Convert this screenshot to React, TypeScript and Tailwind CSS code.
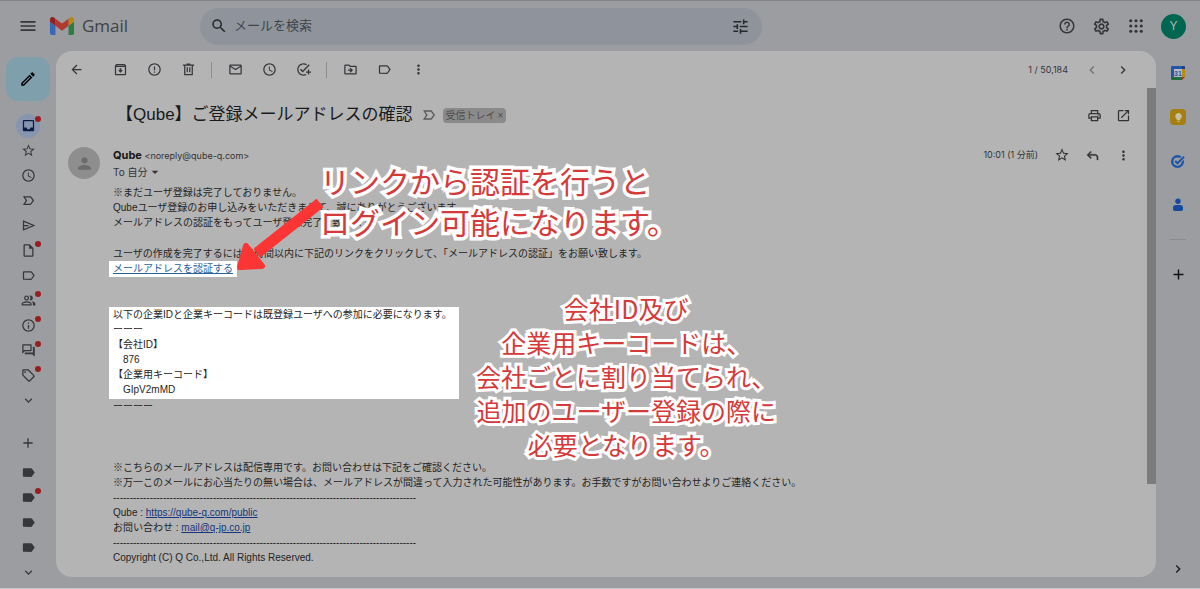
import React from "react";
import type { IconType } from "react-icons";
import {
  MdAdd,
  MdArrowBack,
  MdArrowDropDown,
  MdChevronLeft,
  MdChevronRight,
  MdErrorOutline,
  MdExpandMore,
  MdHelpOutline,
  MdInbox,
  MdInfoOutline,
  MdLabel,
  MdLabelImportantOutline,
  MdLabelOutline,
  MdLightbulb,
  MdMenu,
  MdMoreVert,
  MdOpenInNew,
  MdOutlineAddTask,
  MdOutlineArchive,
  MdOutlineDriveFileMove,
  MdOutlineEdit,
  MdOutlineForum,
  MdOutlineInsertDriveFile,
  MdOutlineLocalOffer,
  MdOutlineMail,
  MdOutlinePeopleAlt,
  MdOutlinePrint,
  MdOutlineSettings,
  MdPerson,
  MdSchedule,
  MdSearch,
  MdStarBorder,
  MdTune,
} from "react-icons/md";

type IconLike = IconType | typeof SendIcon;

type RailItem = {
  label: string;
  icon: IconLike;
  unread?: boolean;
  active?: boolean;
};

const MAIL_FOLDERS: RailItem[] = [
  { label: "受信トレイ", icon: MdInbox, unread: true, active: true },
  { label: "スター付き", icon: MdStarBorder },
  { label: "スヌーズ中", icon: MdSchedule },
  { label: "重要", icon: MdLabelImportantOutline },
  { label: "送信済み", icon: SendIcon },
  { label: "下書き", icon: MdOutlineInsertDriveFile, unread: true },
  { label: "カテゴリ", icon: MdLabelOutline },
  { label: "ソーシャル", icon: MdOutlinePeopleAlt, unread: true },
  { label: "新着", icon: MdInfoOutline, unread: true },
  { label: "フォーラム", icon: MdOutlineForum, unread: true },
  { label: "プロモーション", icon: MdOutlineLocalOffer, unread: true },
  { label: "もっと見る", icon: MdExpandMore },
];

const LABELS: RailItem[] = [
  { label: "ラベル 1", icon: MdLabel },
  { label: "ラベル 2", icon: MdLabel, unread: true },
  { label: "ラベル 3", icon: MdLabel },
  { label: "ラベル 4", icon: MdLabel },
  { label: "ラベルをもっと見る", icon: MdExpandMore },
];

const TOOL_GROUPS: { label: string; icon: IconLike }[][] = [
  [
    { label: "アーカイブ", icon: MdOutlineArchive },
    { label: "迷惑メールを報告", icon: MdErrorOutline },
    { label: "削除", icon: TrashIcon },
  ],
  [
    { label: "未読にする", icon: MdOutlineMail },
    { label: "スヌーズ", icon: MdSchedule },
    { label: "ToDo リストに追加", icon: MdOutlineAddTask },
  ],
  [
    { label: "移動", icon: MdOutlineDriveFileMove },
    { label: "ラベル", icon: MdLabelOutline },
    { label: "その他", icon: MdMoreVert },
  ],
];

const RULE = "-".repeat(91);

function SendIcon({ className }: { className?: string }) {
  return (
    <svg viewBox="0 0 24 24" className={className} fill="none" stroke="currentColor" strokeWidth={2}>
      <path d="M4 5l16.5 7L4 19zM4 12h8" />
    </svg>
  );
}

function TrashIcon({ className }: { className?: string }) {
  return (
    <svg viewBox="0 0 24 24" className={className} fill="none" stroke="currentColor" strokeWidth={2}>
      <path d="M3 5h18M9 3.5h6M6 5v15h12V5M10 8.5v8M14 8.5v8" />
    </svg>
  );
}

function ReplyIcon({ className }: { className?: string }) {
  return (
    <svg viewBox="0 0 24 24" className={className} fill="currentColor" stroke="currentColor" strokeWidth={0.6}>
      <path d="M19 19v-4c0-1.7-1.3-3-3-3H6.8l3.6 3.6L9 17l-6-6 6-6 1.4 1.4L6.8 10H16c2.8 0 5 2.2 5 5v4z" />
    </svg>
  );
}

function AppsIcon({ className }: { className?: string }) {
  return (
    <svg viewBox="0 0 24 24" className={className} fill="currentColor">
      {[5, 12, 19].map((y) =>
        [5, 12, 19].map((x) => <circle key={`${x}-${y}`} cx={x} cy={y} r="2.1" />)
      )}
    </svg>
  );
}

function GmailLogo() {
  return (
    <svg viewBox="52 42 88 66" className="w-6 h-[18px]">
      <path fill="#3a66b5" d="M58 108h14V74L52 59v43c0 3.32 2.69 6 6 6" />
      <path fill="#2b7d43" d="M120 108h14c3.32 0 6-2.69 6-6V59l-20 15" />
      <path fill="#b48a10" d="M120 48v26l20-15v-8c0-7.42-8.47-11.65-14.4-7.2" />
      <path fill="#b13a30" d="M72 74V48l24 18 24-18v26L96 92" />
      <path fill="#8f2120" d="M52 51v8l20 15V48l-5.6-4.4c-5.94-4.45-14.4-.22-14.4 7.2" />
    </svg>
  );
}

function CalendarIcon() {
  return (
    <svg viewBox="0 0 16 16" className="w-4 h-4">
      <path fill="#2456a8" d="M2 1h10v3H4v8H1V2a1 1 0 0 1 1-1z" />
      <path fill="#1b3f85" d="M12 1h2a1 1 0 0 1 1 1v2h-3z" />
      <path fill="#b98a14" d="M12 4h3v8h-3z" />
      <path fill="#1f6b3a" d="M1 12h11v3H2a1 1 0 0 1-1-1z" />
      <path fill="#a8352c" d="M12 12h3l-3 3z" />
      <path fill="#b9bcc2" d="M4 4h8v8H4z" />
      <text x="8" y="10.5" textAnchor="middle" fontSize="7" fontWeight="700" fill="#2456a8">
        31
      </text>
    </svg>
  );
}

function TasksIcon() {
  return (
    <svg viewBox="0 0 16 16" className="w-4 h-4" fill="none">
      <circle cx="7.5" cy="8.5" r="5.3" stroke="#1c55a8" strokeWidth="2.4" />
      <path d="M5 8l2.4 2.4L14 3.6" stroke="#9b9da1" strokeWidth="4" />
      <path d="M5.2 8l2.3 2.3L14 3.8" stroke="#1c55a8" strokeWidth="2" />
    </svg>
  );
}

function ContactsIcon() {
  return (
    <svg viewBox="0 0 16 16" className="w-4 h-4" fill="#154a9c">
      <circle cx="8" cy="4.2" r="2.7" />
      <path d="M3 10.5C3 8.8 4.3 8 6 8h4c1.7 0 3 .8 3 2.5V12c0 1-.7 2-2 2H5c-1.3 0-2-1-2-2z" />
    </svg>
  );
}

function Rail({ items }: { items: RailItem[] }) {
  return (
    <ul className="w-full">
      {items.map(({ label, icon: Icon, unread, active }) => (
        <li key={label} className="h-[25px] flex justify-center items-center">
          <a
            href="#"
            aria-label={label}
            className={
              active
                ? "relative w-6 h-6 rounded-full bg-[#8795b0] text-[#0a1c40] flex items-center justify-center"
                : "relative w-6 h-6 flex items-center justify-center text-[#35373a]"
            }
          >
            <Icon className="w-[15px] h-[15px]" />
            {unread && (
              <span className="absolute top-0.5 -right-px w-1.5 h-1.5 rounded-full bg-[#971d20]" />
            )}
          </a>
        </li>
      ))}
    </ul>
  );
}

function Toolbar() {
  return (
    <div className="h-[37px] shrink-0 flex items-center pl-[3px] pr-[18px] text-[#35363a]">
      <button type="button" aria-label="戻る" className="w-[34px] flex justify-center mr-2.5">
        <MdArrowBack className="w-[15px] h-[15px]" />
      </button>
      {TOOL_GROUPS.map((group, i) => (
        <React.Fragment key={i}>
          {i > 0 && <span className="w-px h-4 mx-1.5 bg-[#8d8e90]" />}
          {group.map(({ label, icon: Icon }) => (
            <button key={label} type="button" aria-label={label} className="w-[34px] flex justify-center">
              <Icon className="w-[15px] h-[15px]" />
            </button>
          ))}
        </React.Fragment>
      ))}
      <span className="ml-auto mr-2 font-['Inter',sans-serif] text-[9px]">1 / 50,184</span>
      <button type="button" aria-label="前へ" className="w-[31px] flex justify-center text-[#6f7073]">
        <MdChevronLeft className="w-4 h-4" />
      </button>
      <button type="button" aria-label="次へ" className="w-[31px] flex justify-center">
        <MdChevronRight className="w-4 h-4" />
      </button>
    </div>
  );
}

function MailBody() {
  return (
    <div className="pl-[57px] pt-[5px] text-[10px] leading-[15px] text-[#242424] whitespace-nowrap">
      <p>※まだユーザ登録は完了しておりません。</p>
      <p>Qubeユーザ登録のお申し込みをいただきまして、誠にありがとうございます。</p>
      <p>メールアドレスの認証をもってユーザ登録完了と致します。</p>
      <p className="mt-4">
        ユーザの作成を完了するには24時間以内に下記のリンクをクリックして、「メールアドレスの認証」をお願い致します。
      </p>
      <p>
        <a href="#" className="inline-block h-4 -ml-1 px-1 bg-white text-[#2a6099] underline">
          メールアドレスを認証する
        </a>
      </p>

      {/* 企業情報 */}
      <div className="mt-[30px] -ml-1 pl-1 pb-0.5 w-[350px] bg-white">
        <p>以下の企業IDと企業キーコードは既登録ユーザへの参加に必要になります。</p>
        <p>ーーー</p>
        <p>【会社ID】</p>
        <p className="pl-2.5">876</p>
        <p>【企業用キーコード】</p>
        <p className="pl-2.5">GIpV2mMD</p>
      </div>
      <p>ーーーー</p>

      <p className="mt-[46px]">※こちらのメールアドレスは配信専用です。お問い合わせは下記をご確認ください。</p>
      <p>
        ※万一このメールにお心当たりの無い場合は、メールアドレスが間違って入力された可能性があります。お手数ですがお問い合わせよりご連絡ください。
      </p>
      <p>{RULE}</p>
      <p>
        Qube :{" "}
        <a href="#" className="text-[#17357a] underline">
          https://qube-q.com/public
        </a>
      </p>
      <p>
        お問い合わせ :{" "}
        <a href="#" className="text-[#17357a] underline">
          mail@q-jp.co.jp
        </a>
      </p>
      <p>{RULE}</p>
      <p>Copyright (C) Q Co.,Ltd. All Rights Reserved.</p>
    </div>
  );
}

// 説明用の矢印と赤文字
function Annotations() {
  return (
    <>
      <svg
        viewBox="0 0 90 76"
        className="absolute left-[179px] top-[108px] w-[90px] h-[76px]"
        fill="#fb3434"
        stroke="#fb3434"
        strokeLinejoin="round"
      >
        <path strokeWidth="11" fill="none" d="M85 7L22 57" />
        <path strokeWidth="6" d="M5 71L11 50L27 70z" />
      </svg>
      <p className="absolute left-[264px] top-[72px] text-[30px] leading-[41px] whitespace-nowrap text-[#d53a3a] [-webkit-text-stroke:7px_white] [paint-order:stroke_fill] [stroke-linejoin:round] font-['Noto_Sans_CJK_JP',sans-serif]">
        リンクから認証を行うと
        <br />
        ログイン可能になります。
      </p>
      <p className="absolute left-[420px] top-[203px] text-[25px] leading-[34px] text-center whitespace-nowrap text-[#d53a3a] [-webkit-text-stroke:6px_white] [paint-order:stroke_fill] [stroke-linejoin:round] font-['Noto_Sans_CJK_JP',sans-serif]">
        会社ID及び
        <br />
        企業用キーコードは、
        <br />
        会社ごとに割り当てられ、
        <br />
        追加のユーザー登録の際に
        <br />
        必要となります。
      </p>
    </>
  );
}

export default function App() {
  return (
    <div
      lang="ja"
      className="min-h-screen flex flex-col bg-[#9b9da1] border-t border-t-[#828387] border-b border-b-[#c6c7ca] font-['Liberation_Sans','Noto_Sans_CJK_JP',sans-serif] text-[#242424]"
    >
      <header className="h-[50px] shrink-0 flex items-center pr-3.5">
        <button type="button" aria-label="メインメニュー" className="w-[50px] pl-[18px] text-[#35373a]">
          <MdMenu className="w-5 h-5" />
        </button>
        <a href="#" className="w-[150px] flex items-center gap-2 font-['Open_Sans',sans-serif] text-[17px] text-[#404245]">
          <GmailLogo />
          Gmail
        </a>
        <div className="flex-1 max-w-[562px] h-[37px] rounded-full bg-[#8f949c] flex items-center pl-2.5 pr-3 text-[#26282b]">
          <MdSearch className="w-[18px] h-[18px] shrink-0" />
          <input
            type="text"
            aria-label="メールを検索"
            placeholder="メールを検索"
            className="flex-1 min-w-0 ml-1.5 bg-transparent outline-none text-[13px] placeholder:text-[#404449]"
          />
          <button type="button" aria-label="検索オプション">
            <MdTune className="w-[19px] h-[19px]" />
          </button>
        </div>
        <div className="ml-auto flex items-center gap-4 text-[#333538]">
          <button type="button" aria-label="サポート">
            <MdHelpOutline className="w-[18px] h-[18px]" />
          </button>
          <button type="button" aria-label="設定">
            <MdOutlineSettings className="w-[19px] h-[19px]" />
          </button>
          <button type="button" aria-label="Google アプリ">
            <AppsIcon className="w-[18px] h-[18px]" />
          </button>
          <button
            type="button"
            aria-label="アカウント"
            className="w-[25px] h-[25px] rounded-full bg-[#006650] text-[#a5b8b2] text-xs flex items-center justify-center"
          >
            Y
          </button>
        </div>
      </header>

      <div className="flex-1 flex pb-[11px]">
        <nav className="w-14 shrink-0 flex flex-col items-center pt-1.5 -mb-[11px]">
          <button
            type="button"
            aria-label="作成"
            className="w-11 h-11 rounded-xl bg-[#809fad] text-black flex items-center justify-center mb-3"
          >
            <MdOutlineEdit className="w-[18px] h-[18px]" />
          </button>
          <Rail items={MAIL_FOLDERS} />
          <button type="button" aria-label="ラベルを作成" className="mt-[17px] mb-[5px] h-[25px] text-[#35373a]">
            <MdAdd className="w-4 h-4" />
          </button>
          <Rail items={LABELS} />
        </nav>

        <main className="flex-1 min-w-0 flex flex-col rounded-2xl overflow-hidden bg-[#b4b4b4]">
          <Toolbar />
          <div className="flex-1 flex">
            <div className="relative flex-1 min-w-0">
              <div className="h-[54px] flex items-center pl-[60px] pr-4 text-[#333]">
                <h1 className="text-[17px] text-[#1a1a1a] whitespace-nowrap">【Qube】ご登録メールアドレスの確認</h1>
                <MdLabelImportantOutline className="w-4 h-4 ml-2 text-[#5a5a5a]" />
                <span className="ml-1.5 h-[15px] px-[3px] rounded-sm bg-[#8a8a8a] text-[10px] text-[#4d4d4d] flex items-center gap-0.5 whitespace-nowrap">
                  受信トレイ
                  <button type="button" aria-label="受信トレイから外す">
                    ×
                  </button>
                </span>
                <button type="button" aria-label="印刷" className="ml-auto">
                  <MdOutlinePrint className="w-[15px] h-[15px]" />
                </button>
                <button type="button" aria-label="新しいウィンドウ" className="ml-3.5">
                  <MdOpenInNew className="w-[15px] h-[15px]" />
                </button>
              </div>

              <div className="flex pl-3 pr-4 pt-[5px] text-[10px] leading-4 text-[#333]">
                <span className="w-8 h-8 mr-[13px] rounded-full bg-[#8e8e8e] text-[#6c6c6c] flex items-center justify-center">
                  <MdPerson className="w-[19px] h-[19px]" />
                </span>
                <div className="font-['Inter','Noto_Sans_CJK_JP',sans-serif]">
                  <p className="text-[9px] leading-4">
                    <strong className="text-[11px] text-[#161616]">Qube</strong> &lt;noreply@qube-q.com&gt;
                  </p>
                  <button type="button" className="flex items-center">
                    To 自分
                    <MdArrowDropDown className="w-4 h-4" />
                  </button>
                </div>
                <div className="ml-auto h-4 flex items-center">
                  <span className="mr-2 font-['Inter','Noto_Sans_CJK_JP',sans-serif] text-[9px]">10:01 (1 分前)</span>
                  <button type="button" aria-label="スター" className="w-[31px] flex justify-center">
                    <MdStarBorder className="w-4 h-4" />
                  </button>
                  <button type="button" aria-label="返信" className="w-[31px] flex justify-center">
                    <ReplyIcon className="w-[15px] h-[15px]" />
                  </button>
                  <button type="button" aria-label="その他" className="w-[31px] -mr-2 flex justify-center">
                    <MdMoreVert className="w-[15px] h-[15px]" />
                  </button>
                </div>
              </div>

              <MailBody />
              <Annotations />
            </div>
            <div className="w-[9px] shrink-0">
              <div className="h-[81%] bg-[#7c7c7c]" />
            </div>
          </div>
        </main>

        <aside className="w-11 shrink-0 flex flex-col items-center pt-3.5">
          <div className="flex flex-col gap-7">
            <CalendarIcon />
            <span className="w-4 h-4 rounded-sm bg-[#a67f12] text-[#c9c0a4] flex items-center justify-center">
              <MdLightbulb className="w-[11px] h-[11px]" />
            </span>
            <TasksIcon />
            <ContactsIcon />
          </div>
          <span className="w-4 h-px mt-[26px] bg-[#8a8c90]" />
          <button type="button" aria-label="アドオンを取得" className="mt-[26px] text-[#111]">
            <MdAdd className="w-[17px] h-[17px]" />
          </button>
          <button type="button" aria-label="サイドパネルを非表示" className="mt-auto text-[#1c1c1c]">
            <MdChevronRight className="w-4 h-4" />
          </button>
        </aside>
      </div>
    </div>
  );
}
